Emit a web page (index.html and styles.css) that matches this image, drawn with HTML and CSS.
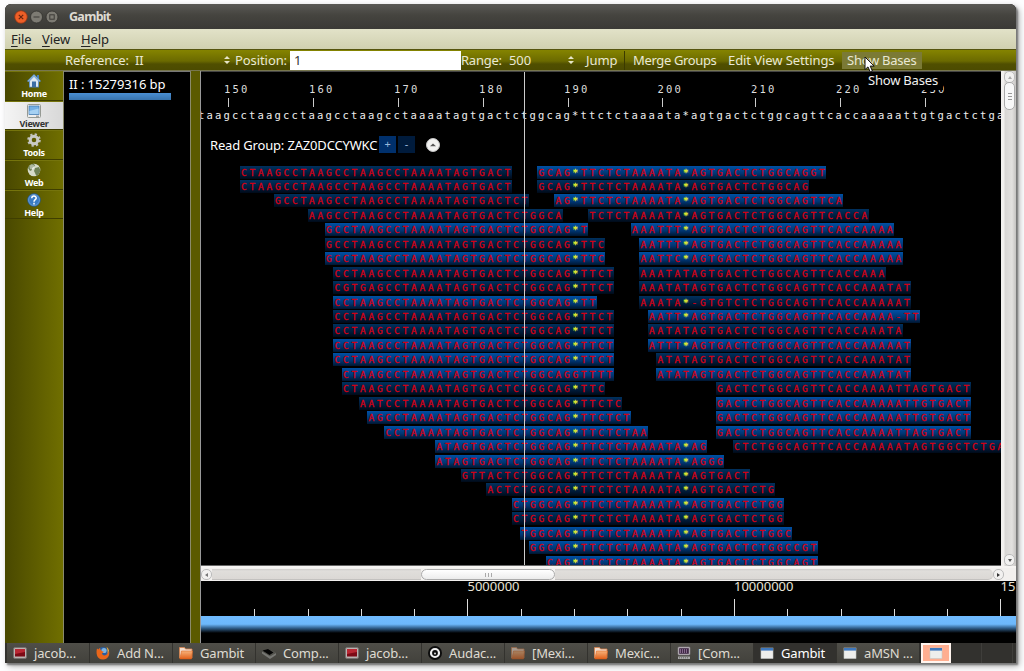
FILE: index.html
```html
<!DOCTYPE html>
<html lang="en">
<head>
<meta charset="utf-8">
<title>Gambit</title>
<link rel="stylesheet" href="styles.css">
</head>
<body>
<svg class="defs" aria-hidden="true">
  <defs>
    <linearGradient id="fold" x1="0" y1="0" x2="0" y2="1"><stop offset="0" stop-color="#f7b27a"/><stop offset="1" stop-color="#e2601a"/></linearGradient>
    <symbol id="i-term" viewBox="0 0 14 14"><rect x=".5" y="1.5" width="13" height="11" rx="1.5" fill="#b9b2b0" stroke="#77706e"/><rect x="2" y="3" width="10" height="7.5" fill="#7d0a16"/><path d="M2 3h10v3L2 8z" fill="#b92733"/></symbol>
    <symbol id="i-folder" viewBox="0 0 14 14"><path d="M.5 1.5h5l1 1.5h6.500v9H.5z" fill="#f3dccb" stroke="#d9814a" stroke-width=".8"/><path d="M2.500 5h11l-1 8H.8z" fill="url(#fold)" stroke="#d65a17" stroke-width=".5"/></symbol>
    <symbol id="i-win" viewBox="0 0 14 14"><rect x="1" y="2" width="12" height="10.500" fill="#eeeeec" stroke="#c6c9c7" stroke-width=".6"/><rect x="1" y="2" width="12" height="2.600" fill="#3f78bd"/></symbol>
    <symbol id="i-fox" viewBox="0 0 14 14"><circle cx="7" cy="7" r="6" fill="#2b5d9f"/><circle cx="8" cy="4.500" r="2.600" fill="#7fb4e0"/><path d="M1 2.500C0 6 0 13.500 7 13.500c5 0 7-4.500 6-8.500-1 .5-1 3-3 4-2 1-4 0-4-2 1 0 1.500-.5 1.500-1.500C5.500 5.500 4 3.500 4 2 3 2.500 2.500 3 2.500 3.500z" fill="#e9661a"/><path d="M13 5c0-1.500-1-3-2.500-4C12 4 12 7 10.500 8.500z" fill="#f6b13a"/></symbol>
    <symbol id="i-chip" viewBox="0 0 14 14"><path d="M0 5.500v2L8 13l6-4V7L8 10z" fill="#777773"/><path d="M0 4.500l6-1.500 8 3.500-6 4z" fill="#55554f"/><path d="M.5 4.500L6 3l5.500 3.500-4 2.500z" fill="#050505"/></symbol>
    <symbol id="i-disc" viewBox="0 0 14 14"><circle cx="7" cy="7" r="7" fill="#0c0c0c"/><circle cx="7" cy="7" r="4" fill="none" stroke="#f0f0f0" stroke-width="2.200"/><circle cx="7" cy="7.500" r="1" fill="#ddd"/></symbol>
    <symbol id="i-pc" viewBox="0 0 14 14"><rect x="1" y="1" width="12" height="8" rx="1" fill="#bdb6bd" stroke="#8a838a" stroke-width=".6"/><rect x="2.200" y="2.200" width="9.600" height="5.600" fill="#3f2745"/><path d="M3 4h8M3 6h8" stroke="#c9a9cf" stroke-dasharray="1 1"/><path d="M1 10.500h12v2.500H1z" fill="#aaa"/><path d="M2 11.800h10" stroke="#666" stroke-dasharray="1 1"/></symbol>
    <symbol id="i-spin" viewBox="0 0 6 8"><path d="M0 3L3 0l3 3zM0 5h6L3 8z" fill="#e6e5c8"/></symbol>
  </defs>
</svg>
<div class="window">
  <header class="titlebar">
    <svg class="controls" viewBox="0 0 46 14">
      <circle cx="7" cy="7" r="6.300" fill="#ee5f27" stroke="#8c3516" stroke-width=".8"/><path d="M4.800 4.800l4.400 4.400M9.200 4.800L4.800 9.200" stroke="#6b2510" stroke-width="1.200"/>
      <circle cx="22.500" cy="7" r="6" fill="#7d7b73" stroke="#33322e" stroke-width=".8"/><path d="M19.500 7h6" stroke="#3c3b37" stroke-width="1.200"/>
      <circle cx="38" cy="7" r="6" fill="#7d7b73" stroke="#33322e" stroke-width=".8"/><rect x="35.800" y="4.800" width="4.400" height="4.400" fill="none" stroke="#3c3b37"/>
    </svg>
    <span class="title">Gambit</span>
  </header>
  <nav class="menubar"><span class="m1"><u>F</u>ile</span><span class="m2"><u>V</u>iew</span><span class="m3"><u>H</u>elp</span></nav>
  <div class="toolbar">
    <span class="tb-ref">Reference:</span><span class="tb-refval">II</span><svg class="spin"><use href="#i-spin"/></svg>
    <span class="tb-pos">Position:</span><span class="field">1</span>
    <span class="tb-range">Range:</span><span class="tb-num">500</span><svg class="spin"><use href="#i-spin"/></svg>
    <span class="tb-jump">Jump</span><span class="tb-merge">Merge Groups</span><span class="tb-edit">Edit View Settings</span><span class="tb-show">Show Bases</span>
  </div>
  <div class="content">
    <aside class="sidebar">
      <div class="nav"><svg viewBox="0 0 14 14"><path d="M7 0L0 7l1 1 1-1v6.500h10V7l1 1 1-1-2-2V1h-2v2z" fill="#4b7fb5"/><path d="M7 2.500L2.800 7v5.800h8.400V7z" fill="#dfe8f0"/><path d="M7 .5L.5 7l1 .8L7 2.500l5.500 5.300 1-.8z" fill="#87b2dc"/><rect x="5" y="7.500" width="4" height="5.500" fill="#3c6ea5"/></svg><b>Home</b></div>
      <div class="nav active"><svg viewBox="0 0 14 14"><rect x=".5" y=".5" width="13" height="13" rx="1" fill="#eee" stroke="#969a94"/><rect x="2" y="2" width="10" height="8.500" fill="#75b0e4" stroke="#3d76ae" stroke-width=".7"/><path d="M2.400 7l9.200-2.500V10H2.400z" fill="#a5d0f2"/><path d="M9 12.200h3" stroke="#888"/></svg><b>Viewer</b></div>
      <div class="nav"><svg viewBox="0 0 14 14"><circle cx="7" cy="7" r="5.600" fill="none" stroke="#bfc0bb" stroke-width="2.400" stroke-dasharray="2.200 2.198"/><circle cx="7" cy="7" r="3.800" fill="none" stroke="#c9cac5" stroke-width="3"/></svg><b>Tools</b></div>
      <div class="nav"><svg viewBox="0 0 14 14"><circle cx="7" cy="7" r="6.300" fill="#d5dac9"/><path d="M1 5c1-3 4-4.500 6-4.200L8 3 5 5v2L3 8zM8 5l4-1 1.300 3c0 3-2 5-4 6L8 10 7 8z" fill="#6d8055"/><circle cx="5" cy="4" r="2.500" fill="#fff" opacity=".45"/></svg><b>Web</b></div>
      <div class="nav"><svg viewBox="0 0 14 14"><circle cx="7" cy="7" r="6.300" fill="#3a7cc4" stroke="#1f5796" stroke-width=".8"/><circle cx="7" cy="7" r="5.500" fill="none" stroke="#90bbe5" stroke-width=".5"/><path d="M4.800 5.300c0-3 4.400-2.800 4.400-.3C9.200 6.800 7 6.500 7 8.700M7 9.800v1.600" fill="none" stroke="#fff" stroke-width="1.500"/></svg><b>Help</b></div>
    </aside>
    <section class="refs"><div class="refname">II : 15279316 bp</div><div class="refbar"></div></section>
    <main class="main">
      <div class="viewrow">
        <div class="canvas">
          <div class="ruler" id="ruler"></div>
          <div class="refseq">taagcctaagcctaagcctaagcctaaaatagtgactctggcag*ttctctaaaata*agtgactctggcagttcaccaaaaattgtgactctga</div>
          <div class="group"><span class="gname">Read Group: ZAZ0DCCYWKC</span><span class="gbtn plus">+</span><span class="gbtn minus">-</span><svg class="collapse" viewBox="0 0 14 14"><circle cx="7" cy="7" r="6.500" fill="#f1f1f0" stroke="#c5c5c5"/><path d="M4 8.200h6L7 5.400z" fill="#555"/></svg></div>
          <div id="reads" class="reads"></div>
          <div class="cursorline"></div>
          <div class="tooltip">Show Bases</div>
        </div>
        <div class="vscroll"><i class="up"></i><i class="vthumb"></i><i class="vtrack"></i><i class="down"></i></div>
      </div>
      <div class="hscroll"><i class="left"></i><i class="trk a"></i><i class="hthumb"></i><i class="trk b"></i><i class="right"></i></div>
      <div class="overview">
        <div class="ticks"><i></i><i></i><i></i><i></i><i></i><i class="major">5000000</i><i></i><i></i><i></i><i></i><i class="major">10000000</i><i></i><i></i><i></i><i></i><i class="major">15</i></div>
        <div class="bluebar"></div>
      </div>
    </main>
  </div>
  <footer class="taskbar">
    <div class="task"><svg><use href="#i-term"/></svg><span>jacob...</span></div>
    <div class="task"><svg><use href="#i-fox"/></svg><span>Add N...</span></div>
    <div class="task"><svg><use href="#i-folder"/></svg><span>Gambit</span></div>
    <div class="task"><svg><use href="#i-chip"/></svg><span>Comp...</span></div>
    <div class="task"><svg><use href="#i-term"/></svg><span>jacob...</span></div>
    <div class="task"><svg><use href="#i-disc"/></svg><span>Audac...</span></div>
    <div class="task min"><svg><use href="#i-folder"/></svg><span>[Mexi...</span></div>
    <div class="task"><svg><use href="#i-folder"/></svg><span>Mexic...</span></div>
    <div class="task"><svg><use href="#i-pc"/></svg><span>[Com...</span></div>
    <div class="task current"><svg><use href="#i-win"/></svg><span>Gambit</span></div>
    <div class="task"><svg><use href="#i-win"/></svg><span>aMSN ...</span></div>
    <div class="pager"><svg><use href="#i-win"/></svg></div><div class="desk"></div><div class="desk"></div>
  </footer>
</div>
<svg class="pointer" viewBox="0 0 12 18"><path d="M1 1v12.500l3-2.600 2.200 5 2.200-1-2.200-4.800h4z" fill="#fff" stroke="#111" stroke-width="1"/></svg>
<script src="reads.js"></script>
</body>
</html>
```
FILE: styles.css
```css
* { box-sizing: border-box; }
body { margin: 0; width: 1024px; height: 671px; overflow: hidden; background: #fdfdfe; font-family: "Noto Sans", sans-serif; font-size: 13px; letter-spacing: -.08px; padding: 4px 0 0 5px; }
.defs { position: absolute; width: 0; height: 0; }
i, b { font-style: normal; }
.window { width: 1011px; height: 659px; display: flex; flex-direction: column; border-radius: 6px 6px 0 0; overflow: hidden; box-shadow: 2px 2px 2px #777, 3px 3px 6px #aaa; background: #000; }
.titlebar { height: 25px; flex: none; display: flex; align-items: center; background: linear-gradient(#5a5955, #45443f 45%, #3b3a36); padding-left: 9px; }
.controls { width: 46px; height: 14px; }
.title { color: #dfdbd2; font-weight: bold; font-size: 12.5px; margin-left: 9px; letter-spacing: -.7px; }
.menubar { height: 20px; flex: none; display: flex; align-items: center; background: linear-gradient(#e2e2c8, #d0d0b0); padding-left: 6px; color: #222; line-height: 20px; }
.menubar u { text-underline-offset: 2px; }
.m1 { width: 31px; }
.m2 { width: 39px; }
.toolbar { height: 22px; flex: none; display: flex; align-items: center; color: #e9e8d4; border-top: 1px solid #55540f; border-bottom: 1px solid #77764e; background: linear-gradient(#858400, #6b6a00 55%, #504f00 70%, #4c4b00); padding-left: 60px; white-space: nowrap; line-height: 19px; }
.toolbar > * { flex: none; }
.spin { width: 6px; height: 8px; }
.tb-ref { width: 70px; }
.tb-refval { width: 89px; }
.tb-pos { width: 60px; padding-left: 5px; }
.field { width: 171px; height: 19px; background: #fff; color: #333; padding-left: 4px; }
.tb-range { width: 48px; letter-spacing: -.25px; }
.tb-num { width: 59px; }
.tb-jump { width: 51px; padding-left: 12px; margin-right: 1px; border-right: 1px solid #3b3a00; }
.tb-merge { width: 94px; padding-left: 7px; letter-spacing: -.36px; }
.tb-edit { width: 122px; padding-left: 8px; }
.tb-show { width: 80px; height: 17px; line-height: 17px; background: #7b7a35; padding-left: 5px; letter-spacing: -.25px; }
.content { display: flex; height: 572px; flex: none; }
.sidebar { width: 59px; background: linear-gradient(90deg, #494800, #706f00); border-right: 1px solid #8a8a6c; }
.nav { height: 29.700px; display: flex; flex-direction: column; align-items: center; padding-top: 3px; border-bottom: 1px solid #3f3e00; box-shadow: inset 0 1px #75740c; color: #fff; }
.nav svg { width: 14px; height: 14px; flex: none; }
.nav b { font: bold 9px/11px "Noto Sans", sans-serif; letter-spacing: -.3px; }
.nav.active { background: linear-gradient(90deg, #f4f4f4, #d8d8d8); color: #333; }
.refs { width: 127px; color: #fff; padding: 2px 0 0 5px; border-right: 1px solid #8a8a6c; border-top: 1px solid #777; }
.refname { height: 19px; line-height: 20px; white-space: nowrap; letter-spacing: -.1px; }
.refbar { width: 102px; height: 7px; background: linear-gradient(#4a8fd4, #3873ad); }
.main { flex: 1; margin-left: 9px; border-left: 1px solid #999; box-shadow: -9px 0 #5b5a00; display: flex; flex-direction: column; min-width: 0; }
.viewrow { display: flex; height: 495px; }
.canvas { position: relative; width: 800px; flex: none; height: 495px; overflow: hidden; border-top: 1px solid #444; border-bottom: 1px solid #666; }
.ruler { display: flex; margin-left: 22.500px; height: 36px; padding-top: 11px; color: #ddd; font: 10.500px/13px "DejaVu Sans Mono", monospace; letter-spacing: 2.179px; }
.mark { flex: none; padding-left: .5px; }
.mark::after { content: ""; display: block; width: 1px; height: 9px; background: #ccc; margin: 2px 0 0 4px; }
.refseq { margin-left: -4px; padding-left: 1px; height: 17px; white-space: nowrap; color: #eee; font: 10.500px/14px "DejaVu Sans Mono", monospace; letter-spacing: 2.179px; }
.group { display: flex; align-items: center; height: 40.500px; padding: 0 0 1px 9px; color: #fff; }
.gname { width: 169px; white-space: nowrap; letter-spacing: -.17px; }
.gbtn { width: 17px; height: 17px; line-height: 16px; text-align: center; background: #00306c; color: #9bb8dc; font-size: 11px; }
.minus { margin-left: 2px; background: #001b3c; }
.collapse { width: 14px; height: 14px; margin-left: 11px; }
.reads { font: 9.500px/13.500px "DejaVu Sans Mono", monospace; letter-spacing: 2.781px; color: #d60014; -webkit-text-stroke: .3px; }
.row { display: flex; height: 14.460px; padding-left: 38.500px; }
.read { flex: none; height: 13px; line-height: 14px; padding-left: 1.400px; white-space: nowrap; background: linear-gradient(#00305e, #001a38 65%, #000a18); }
.read.hi { background: linear-gradient(#0050a4, #003572 60%, #001630); }
.read em { font-style: normal; color: #e2ee30; }
.cursorline { position: absolute; left: 323px; top: 0; width: 1px; height: 495px; background: #ccc; }
.tooltip { position: absolute; left: 663px; top: 0; width: 79px; height: 18px; line-height: 17px; padding-left: 4px; color: #f0f0f0; background: #000; letter-spacing: -.2px; }
.vscroll { width: 15px; background: linear-gradient(90deg, #f2f0ee 3px, #d8d6d4 4px, #e3e1df 11px, #c5c3c1); display: flex; flex-direction: column; padding-left: 3px; }
.up, .down, .left, .right { display: flex; align-items: center; justify-content: center; background: #f2f1f0; border: 1px solid #bbb; border-radius: 5px; flex: none; }
.up, .down { width: 11px; height: 12px; }
.up::after, .down::after, .left::after, .right::after { content: ""; border: 2px solid transparent; }
.up::after { border-bottom: 3px solid #aaa; border-top: 0; }
.down::after { border-top: 3px solid #555; border-bottom: 0; }
.vthumb { width: 11px; height: 28px; margin-top: -1px; border: 1px solid #aaa; border-radius: 5px; background: repeating-linear-gradient(#999 0 1px, transparent 1px 3px) center / 4px 7px no-repeat, #f8f8f8; }
.vtrack { flex: 1; }
.hscroll { height: 15px; display: flex; align-items: center; background: #f2f0ee; border-top: 2px solid #f6f4f2; padding-right: 12px; }
.left, .right { width: 11px; height: 11px; }
.left::after { border-right: 3px solid #777; border-left: 0; }
.right::after { border-left: 3px solid #333; border-right: 0; }
.trk { height: 11px; background: linear-gradient(#cfcdcb, #e0dedb 20%, #dbd8d5); border-bottom: 1px solid #c3c1bf; }
.a { width: 209px; }
.b { flex: 1; border-radius: 0 5px 5px 0; }
.hthumb { width: 134px; height: 11px; border: 1px solid #aaa; border-radius: 6px; background: repeating-linear-gradient(90deg, #aaa 0 1px, transparent 1px 3px) center / 7px 4px no-repeat, linear-gradient(#fff, #ececec); }
.overview { background: #000; height: 62px; overflow: hidden; }
.ticks { display: flex; height: 35px; align-items: flex-end; }
.ticks i { flex: none; width: 53.300px; height: 7px; border-left: 1px solid #ddd; }
.ticks i:first-child { border-color: transparent; }
.ticks i.major { height: 35px; border: 0; background: linear-gradient(#ddd, #ddd) 0 18px / 1px 17px no-repeat; color: #e8e4d8; line-height: 11px; white-space: nowrap; letter-spacing: 0; }
.bluebar { height: 17px; background: linear-gradient(#70bbff, #6db8fb 48%, #2f5d88 72%, #000); }
.taskbar { height: 20px; flex: none; display: flex; background: #32312e; padding-left: 1px; color: #dfdbd2; }
.task { width: 83px; flex: none; display: flex; align-items: center; padding-left: 6px; background: linear-gradient(#4f4e48, #42413c); border-left: 1px solid #33322e; white-space: nowrap; line-height: 20px; letter-spacing: -.15px; }
.task svg { width: 14px; height: 14px; margin-right: 7px; flex: none; }
.current { background: #32312e; color: #fff; }
.min svg { opacity: .55; }
.pager { width: 30px; display: flex; align-items: center; justify-content: center; background: #ffae90; border: 2px solid #fff4ee; margin-left: 2px; }
.pager svg { width: 14px; height: 14px; }
.desk { width: 31px; border-right: 1px solid #3f3e3b; }
.pointer { position: absolute; left: 864px; top: 56px; width: 12px; height: 18px; }
```
FILE: reads.js
```js
const CELL = 8.5;
const MID = '*TTCTCTAAAATA*';
const L = 'CTAAAATAGTGACTCTGGCAG';
const R = 'CTCTGGCAGTTCACC';

// Each row lists its reads as [start cell, highlighted, bases].
const rows = [
  [[0, 0, 'CTAAGCCTAAGCCTAAGCCTAAAATAGTGACT'], [35, 1, 'GCAG' + MID + 'AGTGACTCTGGCAGGT']],
  [[0, 0, 'CTAAGCCTAAGCCTAAGCCTAAAATAGTGACT'], [35, 0, 'GCAG' + MID + 'AGTGACTCTGGCAG']],
  [[4, 0, 'GCCTAAGCCTAAGCCTAAAATAGTGACTCT'], [37, 1, 'AG' + MID + 'AGTGACTCTGGCAGTTCA']],
  [[8, 0, 'AAGCCTAAGCCTAAAATAGTGACTCTGGCA'], [41, 0, 'TCTCTAAAATA*AGTGA' + R + 'A']],
  [[10, 1, 'GCCTAAGC' + L + '*T'], [46, 1, 'AAATTT*AGTGA' + R + 'AAAA']],
  [[10, 0, 'GCCTAAGC' + L + '*TTC'], [47, 1, 'AATTT*AGTGA' + R + 'AAAAA']],
  [[10, 1, 'GCCTAAGC' + L + '*TTC'], [47, 1, 'AATTC*AGTGA' + R + 'AAAAA']],
  [[11, 0, 'CCTAAGC' + L + '*TTCT'], [47, 0, 'AAATATAGTGA' + R + 'AAA']],
  [[11, 0, 'CGTGAGC' + L + '*TTCT'], [47, 0, 'AAATATAGTGA' + R + 'AAATAT']],
  [[11, 1, 'CCTAAGC' + L + '*TT'], [47, 0, 'AAATA*-GTGT' + R + 'AAAAAT']],
  [[11, 0, 'CCTAAGC' + L + '*TTCT'], [48, 1, 'AATT*AGTGA' + R + 'AAAA-TT']],
  [[11, 0, 'CCTAAGC' + L + '*TTCT'], [48, 0, 'AATATAGTGA' + R + 'AAATA']],
  [[11, 1, 'CCTAAGC' + L + '*TTCT'], [48, 1, 'ATTT*AGTGA' + R + 'AAAAAT']],
  [[11, 1, 'CCTAAGC' + L + '*TTCT'], [49, 0, 'ATATAGTGA' + R + 'AAATAT']],
  [[12, 1, 'CTAAGC' + L + 'GTTTT'], [49, 1, 'ATATAGTGA' + R + 'AAATAT']],
  [[12, 0, 'CTAAGC' + L + '*TTC'], [56, 0, 'GA' + R + 'AAAATTAGTGACT']],
  [[14, 0, 'AATC' + L + '*TTCTC'], [56, 1, 'GA' + R + 'AAAAATTGTGACT']],
  [[15, 1, 'AGC' + L + '*TTCTCT'], [56, 1, 'GA' + R + 'AAAAATTGTGACT']],
  [[17, 1, 'C' + L + '*TTCTCTAA'], [56, 1, 'GA' + R + 'AAAATTAGTGACT']],
  [[23, 1, 'ATAGTGACTCTGGCAG' + MID + 'AG'], [58, 0, R + 'AAAAATAGTGGCTCTGA']],
  [[23, 1, 'ATAGTGACTCTGGCAG' + MID + 'AGGG']],
  [[26, 0, 'GTTACTCTGGCAG' + MID + 'AGTGACT']],
  [[29, 0, 'ACTCTGGCAG' + MID + 'AGTGACTCTG']],
  [[32, 1, 'CTGGCAG' + MID + 'AGTGACTCTGG']],
  [[32, 0, 'CTGGCAG' + MID + 'AGTGACTCTGG']],
  [[33, 1, 'TGGCAG' + MID + 'AGTGACTCTGGC']],
  [[34, 1, 'GGCAG' + MID + 'AGTGACTCTGGCCGT']],
  [[36, 1, 'CAG' + MID + 'AGTGACTCTGGCAGT']]
];

document.getElementById('reads').innerHTML = rows.map(reads => {
  let at = 0;
  return '<div class="row">' + reads.map(([start, hi, seq]) => {
    const gap = (start - at) * CELL;
    at = start + seq.length;
    return `<div class="read${hi ? ' hi' : ''}" style="margin-left:${gap}px;width:${seq.length * CELL}px">${seq.replace(/\*/g, '<em>*</em>')}</div>`;
  }).join('') + '</div>';
}).join('');

// Ruler marks; gap columns in the alignment widen the interval they fall in.
const marks = [[150, 10], [160, 10], [170, 10], [180, 10], [190, 11], [200, 11], [210, 10], [220, 10], [230, 10]];
document.getElementById('ruler').innerHTML = marks
  .map(([n, cells]) => `<div class="mark" style="width:${cells * CELL}px">${n}</div>`).join('');
```
